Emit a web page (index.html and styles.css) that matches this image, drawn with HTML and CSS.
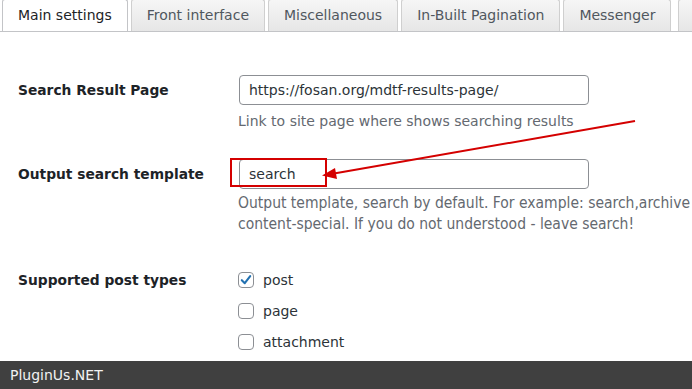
FILE: index.html
```html
<!DOCTYPE html>
<html lang="en">
  <head>
    <meta charset="UTF-8" />
    <title>MDTF Settings</title>
    <link rel="stylesheet" href="styles.css">
  </head>
  <body>
    <div class="tabs">
      <span class="tab active">Main settings</span>
      <span class="tab">Front interface</span>
      <span class="tab">Miscellaneous</span>
      <span class="tab">In-Built Pagination</span>
      <span class="tab">Messenger</span>
      <span class="tab tab-more"></span>
    </div>

    <div class="settings">
      <!--row: results page------------------------------------------------>
      <div class="row row-results">
        <div class="label">Search Result Page</div>
        <div class="field">
          <input class="text-input" type="text" value="https://fosan.org/mdtf-results-page/" />
          <p class="desc">Link to site page where shows searching results</p>
        </div>
      </div>

      <!--row: output template--------------------------------------------->
      <div class="row row-template">
        <div class="label">Output search template</div>
        <div class="field">
          <input class="text-input" type="text" value="search" />
          <p class="desc desc-narrow">
            Output template, search by default. For example: search,archive<br />
            content-special. If you do not understood - leave search!
          </p>
        </div>
      </div>

      <!--row: post types-------------------------------------------------->
      <div class="row row-types">
        <div class="label">Supported post types</div>
        <div class="field checks">
          <label class="check"><span class="box checked"><svg viewBox="0 0 16 16" width="14" height="14"><path d="M3.2 8.2 L6.6 11.6 L12.8 3.6" fill="none" stroke="#2271b1" stroke-width="2.4" stroke-linecap="round" stroke-linejoin="round"/></svg></span>post</label>
          <label class="check"><span class="box"></span>page</label>
          <label class="check"><span class="box"></span>attachment</label>
        </div>
      </div>
    </div>

    <!-- annotation: red box and arrow -->
    <div class="mark-box"></div>
    <svg class="mark-arrow" width="692" height="389" viewBox="0 0 692 389">
      <line x1="635" y1="121" x2="334" y2="173.5" stroke="#d40000" stroke-width="2" />
      <polygon points="322,175.5 335,168 337,179" fill="#d40000" />
    </svg>

    <div class="footer">PluginUs.NET</div>
  </body>
</html>
```

FILE: styles.css
```css
body {
  margin: 0;
  background: #fff;
  font-family: "DejaVu Sans", Verdana, sans-serif;
  font-size: 14px;
  color: #1d2327;
}
.tabs {
  display: flex;
  gap: 3px;
  padding-left: 2px;
  height: 31px;
  border-bottom: 1px solid #c3c4c7;
  overflow: hidden;
  white-space: nowrap;
}
.tab {
  flex: none;
  box-sizing: border-box;
  height: 32px;
  margin-top: -1px;
  padding: 0 15px;
  line-height: 31px;
  color: #50575e;
  background: linear-gradient(#f6f6f6, #e6e6e6);
  border: 1px solid #cfcfcf;
  border-bottom: none;
  border-radius: 3px 3px 0 0;
}
.tab.active {
  background: #fff;
  color: #1d2327;
  border-color: #c3c4c7;
  height: 33px;
}
.tab-pad {
  padding: 0 17px;
}
.tab-more {
  width: 40px;
  margin-left: 4px;
}
.settings {
  padding: 43px 0 0 18px;
}
.row {
  display: grid;
  grid-template-columns: 220px 1fr;
}
.label {
  font-weight: 700;
  font-size: 13.8px;
  padding-top: 6px;
  line-height: 18px;
}
.text-input {
  display: block;
  box-sizing: border-box;
  width: 350px;
  height: 30px;
  margin: 0 0 0 1px;
  padding: 0 9px;
  font-family: "DejaVu Sans", Verdana, sans-serif;
  font-size: 14px;
  color: #2c3338;
  border: 1px solid #8c8f94;
  border-radius: 4px;
  background: #fff;
}
.desc {
  margin: 6px 0 0;
  color: #646970;
  line-height: 20px;
  white-space: nowrap;
}
.desc-narrow {
  font-family: "DejaVu Sans Condensed", "DejaVu Sans", sans-serif;
  font-size: 15.5px;
  line-height: 21px;
  margin-top: 4px;
}
.row-template {
  margin-top: 28px;
}
.row-types {
  margin-top: 37px;
}
.row-types .label {
  padding-top: 0;
  line-height: 16px;
}
.checks {
  display: flex;
  flex-direction: column;
  gap: 15px;
}
.check {
  display: flex;
  align-items: center;
  gap: 9px;
  height: 16px;
  color: #2c3338;
}
.box {
  box-sizing: border-box;
  width: 16px;
  height: 16px;
  border: 1px solid #8c8f94;
  border-radius: 4px;
  display: flex;
  align-items: center;
  justify-content: center;
}
.mark-box {
  position: absolute;
  left: 230px;
  top: 158px;
  width: 97px;
  height: 29px;
  box-sizing: border-box;
  border: 2px solid #d40000;
}
.mark-arrow {
  position: absolute;
  left: 0;
  top: 0;
  pointer-events: none;
}
.footer {
  position: fixed;
  left: 0;
  right: 0;
  bottom: 0;
  height: 28px;
  line-height: 28px;
  padding-left: 10px;
  background: #404040;
  color: #f2f2f2;
  font-family: "DejaVu Sans", sans-serif;
  font-size: 14px;
}
```
